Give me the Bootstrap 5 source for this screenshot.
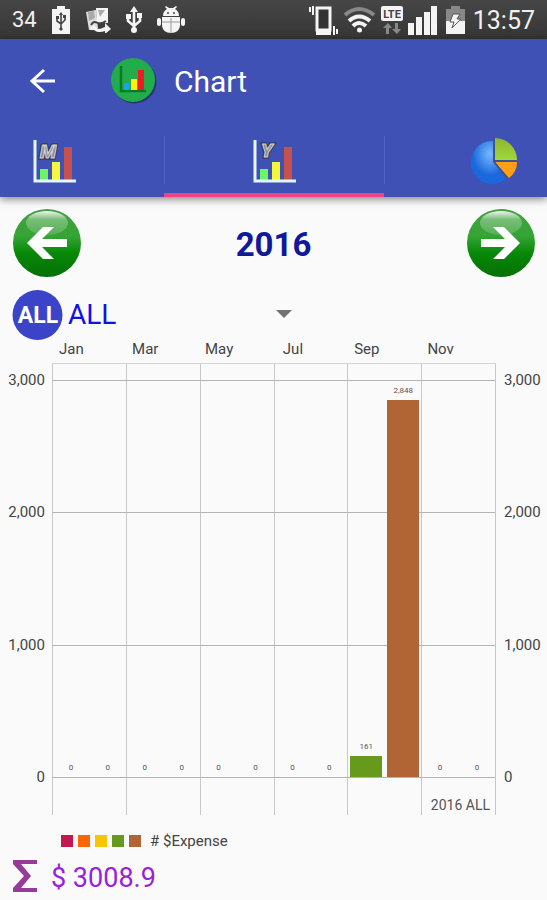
<!DOCTYPE html>
<html lang="en">
<head>
<meta charset="utf-8">
<meta name="viewport" content="width=device-width, initial-scale=1">
<title>Chart</title>
<link href="https://cdn.jsdelivr.net/npm/bootstrap@5.3.0/dist/css/bootstrap.min.css" rel="stylesheet">
<style>
body { font-family: Roboto, "Liberation Sans", sans-serif; background: #fafafa; color: #444; }
svg { display: block; flex: none; }
.status-bar { height: 39px; background: linear-gradient(#464646, #363636); color: #f0f0f0; font-size: 22px; line-height: 39px; }
.status-icons { gap: 14px; }
.status-time { font-size: 25px; padding-top: 2px; }
.app-head { background: #3f51b5; box-shadow: 0 2px 8px rgba(0,0,0,.5); }
.app-bar { height: 86px; }
.app-bar h1 { font-size: 30px; line-height: 40px; font-weight: 400; }
.bare { background: none; border: 0; padding: 0; }
.tab-strip { height: 72px; overflow: hidden; }
.tab-item { flex: 0 0 220px; height: 72px; display: flex; align-items: center; justify-content: center; padding-top: 3px; border-bottom: 4px solid transparent; }
.tab-item.active { border-color: #f0447f; }
.tab-rule { width: 1px; height: 48px; margin: 11px -1px 0 0; background: #5263c4; flex: none; }
.letter { font-size: 19px; font-weight: 900; font-style: italic; fill: #8c8c94; stroke: #d4d4d4; stroke-width: 1px; }
.letter-edge { font-size: 19px; font-weight: 900; font-style: italic; fill: none; stroke: #2c3050; stroke-width: 3px; }
.year-row { padding: 11px 11px 0; }
.year-title { font-size: 33px; line-height: 40px; font-weight: 700; color: #10199b; padding-top: 3px; }
.filter-row { padding: 11px 12px 0; height: 63px; }
.filter-box { width: 232px; padding-top: 6px; }
.filter-box select { width: 100%; appearance: none; font-size: 28px; line-height: 40px; color: #1010e8; padding-left: 5px; }
.caret { right: 3px; top: 20px; pointer-events: none; }
.chart-frame { display: grid; grid-template-columns: 53px 1fr 51px; grid-template-rows: 22px 452px; }
.month-names { display: grid; grid-template-columns: repeat(6, 1fr); grid-column: 2; font-size: 15px; line-height: 16px; color: #444; }
.month-names span { width: 50%; text-align: center; white-space: nowrap; display: flex; justify-content: center; }
.scale { grid-row: 2; display: grid; grid-template-rows: 7px 132px 133px 132px 30px; font-size: 15px; line-height: 20px; color: #444; }
.scale-left { grid-column: 1; }
.scale-right { grid-column: 3; }
.plot { grid-area: 2 / 2; display: grid; grid-template-columns: repeat(12, 1fr); grid-template-rows: 16px 132px 133px 132px 38px; border-right: 1px solid #c8c8c8; border-top: 1px solid #d4d4d4; margin-left: -1px; }
.v-lines { grid-area: 1 / 1 / 6 / 13; display: grid; grid-template-columns: repeat(6, 1fr); }
.v-lines i { border-left: 1px solid #c8c8c8; }
.h-line { grid-column: 1 / 13; border-top: 1px solid #b4b4b4; }
.line-a { grid-row: 2; } .line-b { grid-row: 3; } .line-c { grid-row: 4; } .line-d { grid-row: 5; }
.bars { grid-area: 2 / 1 / 5 / 13; display: grid; grid-template-columns: repeat(12, 1fr); }
.slot { display: flex; flex-direction: column; justify-content: flex-end; padding: 0 2px 0 3px; font-size: 8px; line-height: 10px; text-align: center; color: #555; }
.slot span { margin-bottom: 4px; }
.bar { flex: none; }
.green { background: #669a1c; }
.brown { background: #b26534; }
.red { background: #c2184e; }
.orange { background: #ff6600; }
.gold { background: #f7c600; }
.plot-note { grid-area: 5 / 7 / 6 / 13; font-size: 14px; line-height: 20px; padding: 18px 5px 0 0; text-align: right; color: #555; }
.legend-row { padding: 16px 0 0 61px; font-size: 15px; line-height: 20px; gap: 5px; }
.swatch { width: 12px; height: 12px; }
.total-row { padding: 5px 13px 0; gap: 13px; }
.total-row output { font-size: 27px; line-height: 40px; color: #9a20dc; padding-top: 2px; }
.total-row svg { margin-bottom: 2px; }
</style>
</head>
<body>
<div class="status-bar d-flex align-items-center px-2">
  <div class="status-icons d-flex align-items-center ps-1">
  <span>34</span>
  <svg width="20" height="30" viewBox="0 0 20 30"><path d="M6 1h8v3h5v25H1V4h5z" fill="#f4f4f4"/><path d="M10 8v16M6 13v3l4 3 4-4v-3" fill="none" stroke="#444" stroke-width="1.6"/><path d="M10 7l2 3H8zM5 11h3v3H5zM12 10h3v3h-3zM10 22l2 2-2 2-2-2z" fill="#444"/></svg>
  <svg width="26" height="26" viewBox="0 0 26 26"><path d="M1 5l10-2 2 18-9 2z" fill="#ddd"/><path d="M11 1h12v15H12z" fill="#f4f4f4"/><path d="M3 5l6-1 1 7-6 3zM13 3l7 0-5 7z" fill="#aaa"/><path d="M5 23c1-5 4-6 7-2 2 2 5 0 8-1v-4l6 6-6 5v-3c-5 2-9 1-11-1z" fill="#f4f4f4"/><path d="M6 18c5-8 6 3 15-4" fill="none" stroke="#444" stroke-width="2"/></svg>
  <svg width="18" height="28" viewBox="0 0 18 28"><path d="M9 4v20M3 10v5l6 5 6-5V9" fill="none" stroke="#f4f4f4" stroke-width="2.6"/><path d="M9 0l4 6H5zM1 8h5v5H1zM12 7h5v5h-5z" fill="#f4f4f4"/><circle cx="9" cy="24" r="3" fill="#f4f4f4"/></svg>
  <svg width="28" height="28" viewBox="0 0 28 28"><path d="M6 10C6 6 8 4 10 3L8 1l1-1 3 2h4l3-2 1 1-2 2c2 1 4 3 4 7z" fill="#f4f4f4"/><path d="M5 11h18v8c0 5-4 8-9 8s-9-3-9-8z" fill="#f4f4f4"/><rect y="12" width="4" height="8" rx="2" fill="#f4f4f4"/><rect x="24" y="12" width="4" height="8" rx="2" fill="#f4f4f4"/><path d="M14 12v15M5 16h18" stroke="#999" stroke-width="1"/><circle cx="11" cy="7" r="1" fill="#444"/><circle cx="17" cy="7" r="1" fill="#444"/></svg>
  </div>
  <svg class="ms-auto me-1" width="30" height="32" viewBox="0 0 30 32"><path d="M8 4h13v22H8z" fill="#333" stroke="#f4f4f4" stroke-width="3"/><path d="M7 25h15v6H7z" fill="#f4f4f4"/><path d="M4 2v9M1 3v5M25 22v9M28 25v5" stroke="#f4f4f4" stroke-width="2"/></svg>
  <svg class="me-1" width="33" height="28" viewBox="0 0 33 28" fill="none" stroke="#f4f4f4" stroke-width="4"><path d="M2 9q14-12 29 0" stroke="#888"/><path d="M6 15q10-9 21 0M10 20q6-6 13 0"/><circle cx="16.500" cy="24" r="2.500" fill="#f4f4f4" stroke="none"/></svg>
  <svg class="me-1" width="24" height="32" viewBox="0 0 24 32"><rect x="1" y="2" width="22" height="15" rx="2" fill="#f4f4f4"/><text x="12" y="14" font-size="11" font-weight="700" text-anchor="middle" fill="#444">LTE</text><path d="M8 19l4 5h-3v6H6v-6H3zM17 30l4-5h-3v-6h-3v6h-3z" fill="#888"/></svg>
  <svg class="me-2" width="30" height="32" viewBox="0 0 30 32" fill="#f4f4f4"><path d="M0 19h6v12H0zM8 13h6v18H8zM16 8h6v23h-6zM23 2h6v29h-6z"/></svg>
  <svg class="me-2" width="19" height="30" viewBox="0 0 19 30"><path d="M5 1h9v3h5v25H0V4h5z" fill="#888"/><path d="M0 16h19v13H0z" fill="#f4f4f4"/><path d="M7 9h7l-3 5h4L6 23l2-6H4z" fill="#f4f4f4" stroke="#555"/></svg>
  <span class="status-time me-1">13:57</span>
</div>

<header class="app-head">
  <div class="app-bar d-flex align-items-center text-white">
    <button class="bare ms-4 ps-1" type="button" aria-label="Back"><svg width="30" height="28" viewBox="0 0 30 28" fill="none" stroke="#fff" stroke-width="3"><path d="M16 2L4 13l12 11M4 13h23"/></svg></button>
    <svg class="ms-5 me-3" width="52" height="48" viewBox="0 0 52 48"><circle cx="28.500" cy="23.500" r="22" fill="#26366f"/><circle cx="27" cy="22" r="22" fill="#22ac4b"/><path d="M15 8v25h25" fill="none" stroke="#087a20" stroke-width="2.500"/><path fill="#18a5e5" d="M18 25h5v7h-5z"/><path fill="#fff200" d="M25 21h6v11h-6z"/><path fill="#ed1c24" d="M32 12h6v20h-6z"/></svg>
    <h1 class="mb-0">Chart</h1>
  </div>
  <nav class="tab-strip d-flex justify-content-center" aria-label="Chart type">
    <a class="tab-item" href="#month" aria-label="Month"><svg width="44" height="46" viewBox="0 0 44 46"><path fill="#6bf465" d="M8 31h8v11H8z"/><path fill="#f5f53b" d="M20 24h8v18h-8z"/><path fill="#c8504f" d="M32 9h8v33h-8z"/><path d="M3 2v41h41" fill="none" stroke="#e2f7ff" stroke-width="3"/><text class="letter-edge" x="8" y="20" aria-hidden="true">M</text><text class="letter" x="8" y="20">M</text></svg></a>
    <span class="tab-rule"></span>
    <a class="tab-item active" href="#year" aria-label="Year" aria-current="page"><svg width="44" height="46" viewBox="0 0 44 46"><path fill="#6bf465" d="M8 31h8v11H8z"/><path fill="#f5f53b" d="M20 24h8v18h-8z"/><path fill="#c8504f" d="M32 9h8v33h-8z"/><path d="M3 2v41h41" fill="none" stroke="#e2f7ff" stroke-width="3"/><text class="letter-edge" x="9" y="19" aria-hidden="true">Y</text><text class="letter" x="9" y="19">Y</text></svg></a>
    <span class="tab-rule"></span>
    <a class="tab-item" href="#pie" aria-label="Pie"><svg width="48" height="48" viewBox="0 0 48 48"><defs><radialGradient id="pb" cx=".55" cy=".3"><stop stop-color="#79b9ff"/><stop offset="1" stop-color="#1a68dc"/></radialGradient><linearGradient id="pg" x2="0" y2="1"><stop stop-color="#8fb52b"/><stop offset="1" stop-color="#9fd83c"/></linearGradient></defs><path d="M23 25V4a21.500 21.500 0 1 0 13 38z" fill="url(#pb)"/><path d="M25 23V1a22 22 0 0 1 22 22z" fill="url(#pg)"/><path d="M25 25h22q0 10-8 16z" fill="#ffa012"/><path d="M24 2v22h23M24 24l14 18" fill="none" stroke="#3d5372"/></svg></a>
  </nav>
</header>

<main>
  <div class="year-row d-flex justify-content-between align-items-center">
    <button class="bare" type="button" aria-label="Previous year"><svg width="70" height="70" viewBox="0 0 70 70"><defs><linearGradient id="ball" x2="0" y2="1"><stop stop-color="#43a043"/><stop offset=".4" stop-color="#35a535"/><stop offset=".65" stop-color="#078807"/><stop offset="1" stop-color="#067006"/></linearGradient><linearGradient id="gloss" x2="0" y2="1"><stop stop-color="#fff" stop-opacity=".9"/><stop offset=".35" stop-color="#fff" stop-opacity=".3"/><stop offset="1" stop-color="#fff" stop-opacity=".15"/></linearGradient></defs><circle cx="36" cy="35" r="34" fill="url(#ball)"/><ellipse cx="36" cy="15" rx="21" ry="12" fill="url(#gloss)"/><path d="M16 35L32 19h11L31 31h25v8H31l12 12H32z" fill="#fff"/></svg></button>
    <h2 class="year-title mb-0">2016</h2>
    <button class="bare" type="button" aria-label="Next year"><svg width="70" height="70" viewBox="0 0 70 70"><circle cx="35" cy="35" r="34" fill="url(#ball)"/><ellipse cx="35" cy="15" rx="21" ry="12" fill="url(#gloss)"/><path d="M54 35L38 19H27l12 12H15v8h24L27 51h11z" fill="#fff"/></svg></button>
  </div>

  <div class="filter-row d-flex align-items-start">
    <svg width="51" height="51" viewBox="0 0 51 51"><circle cx="25.500" cy="26" r="25" fill="#3b43c8"/><text x="26" y="34" font-size="23" font-weight="700" text-anchor="middle" fill="#fff">ALL</text></svg>
    <div class="filter-box position-relative">
      <select class="bare" aria-label="Category"><option>ALL</option></select>
      <svg class="caret position-absolute" width="16" height="10" viewBox="0 0 16 10"><path d="M0 1h16L8 9z" fill="#737373"/></svg>
    </div>
  </div>

  <section class="chart-frame" aria-label="Expense by month">
    <div class="month-names"><span>Jan</span><span>Mar</span><span>May</span><span>Jul</span><span>Sep</span><span>Nov</span></div>
    <div class="scale scale-left text-end pe-2"><span></span><span>3,000</span><span>2,000</span><span>1,000</span><span>0</span></div>
    <div class="plot">
      <div class="v-lines"><i></i><i></i><i></i><i></i><i></i><i></i></div>
      <div class="h-line line-a"></div><div class="h-line line-b"></div><div class="h-line line-c"></div><div class="h-line line-d"></div>
      <div class="bars">
        <div class="slot"><span>0</span></div><div class="slot"><span>0</span></div><div class="slot"><span>0</span></div><div class="slot"><span>0</span></div>
        <div class="slot"><span>0</span></div><div class="slot"><span>0</span></div><div class="slot"><span>0</span></div><div class="slot"><span>0</span></div>
        <div class="slot"><span>161</span><div class="bar green" style="height: 5.370%"></div></div>
        <div class="slot"><span>2,848</span><div class="bar brown" style="height: 94.930%"></div></div>
        <div class="slot"><span>0</span></div><div class="slot"><span>0</span></div>
      </div>
      <div class="plot-note">2016 ALL</div>
    </div>
    <div class="scale scale-right ps-2"><span></span><span>3,000</span><span>2,000</span><span>1,000</span><span>0</span></div>
  </section>

  <div class="legend-row d-flex align-items-center">
    <span class="swatch red"></span><span class="swatch orange"></span><span class="swatch gold"></span><span class="swatch green"></span><span class="swatch brown"></span>
    <span class="ps-1"># $Expense</span>
  </div>
  <div class="total-row d-flex align-items-center">
    <svg width="25" height="32" viewBox="0 0 25 32"><path d="M0 0h24v4H8l10 12L8 28h16v4H0v-4l11-12L0 4z" fill="#983a9c"/></svg>
    <output>$ 3008.9</output>
  </div>
</main>
<script src="https://cdn.jsdelivr.net/npm/bootstrap@5.3.0/dist/js/bootstrap.bundle.min.js"></script>
</body>
</html>
